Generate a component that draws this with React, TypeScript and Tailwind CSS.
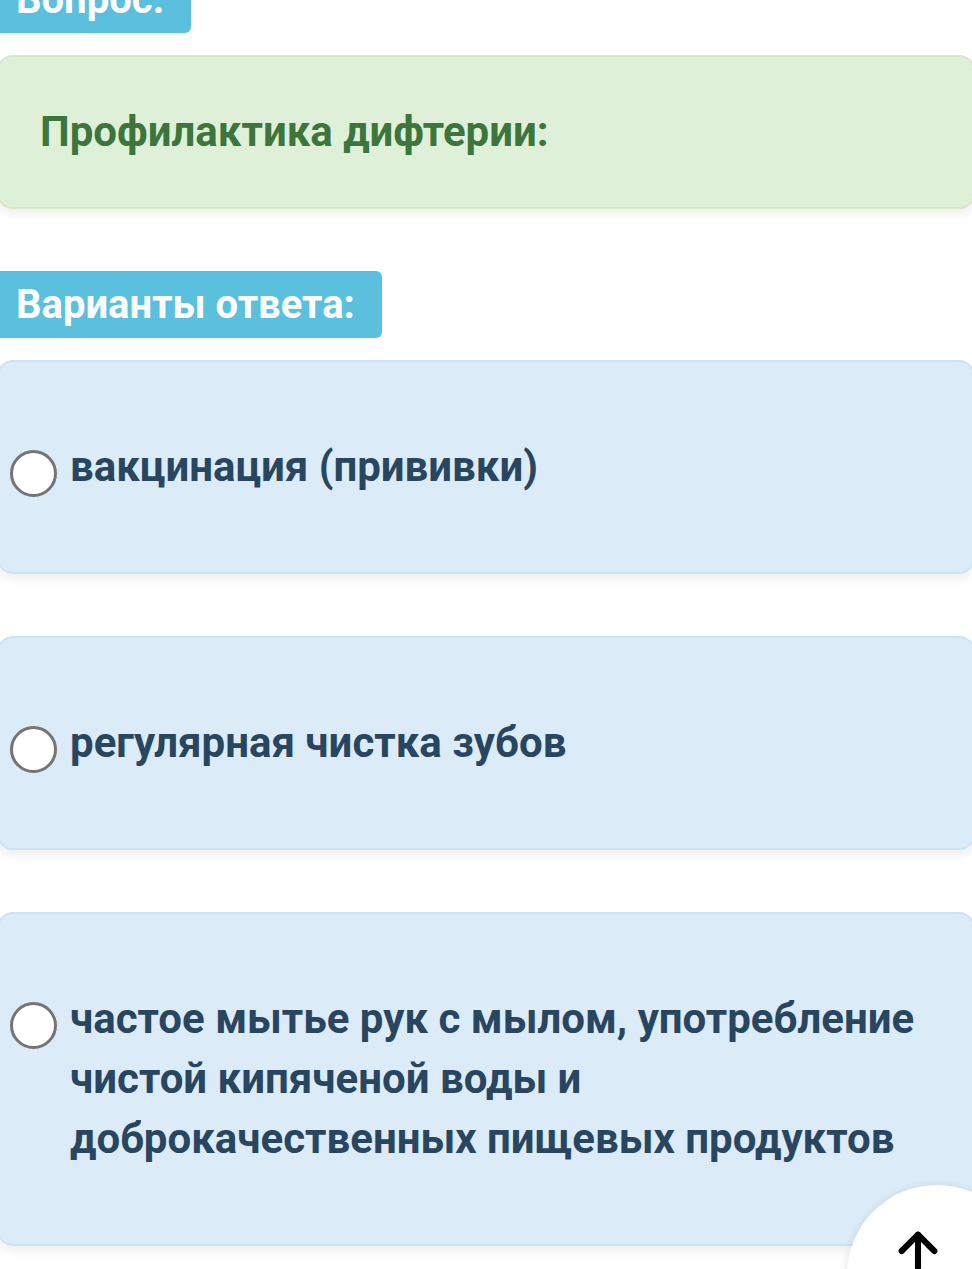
import { ArrowUp } from 'lucide-react';

const answers = [
  'вакцинация (прививки)',
  'регулярная чистка зубов',
  'частое мытье рук с мылом, употребление чистой кипяченой воды и доброкачественных пищевых продуктов',
];

function Label({ children }: { children: React.ReactNode }) {
  return (
    <div className="inline-block rounded-r-md bg-[#5bc0de] pl-[16px] pr-[27px] text-[40px] font-bold leading-[67px] text-white">
      {children}
    </div>
  );
}

export default function App() {
  return (
    <div className="relative h-[1269px] overflow-hidden bg-white font-['Roboto',sans-serif]">
      <div className="-mt-[34px] flex flex-col">
        <div>
          <Label>Вопрос:</Label>
        </div>

        <div className="mx-[-3px] mt-[22px] rounded-2xl border-2 border-[#d6e9c6] bg-[#dff0d8] px-[41px] py-[45px] shadow-[0_6px_8px_rgba(0,0,0,0.06)]">
          <p className="text-[42px] font-bold leading-[60px] text-[#3c763d]">Профилактика дифтерии:</p>
        </div>

        <div className="mt-[62px]">
          <Label>Варианты ответа:</Label>
        </div>

        <div className="mt-[22px] flex flex-col gap-[62px]">
          {answers.map((a) => (
            <div
              key={a}
              className="mx-[-3px] flex items-start gap-[13px] rounded-2xl border-2 border-[#cfe3f3] bg-[#dcebf8] py-[75px] pl-[11px] pr-10 shadow-[0_6px_8px_rgba(0,0,0,0.06)]"
            >
              <span className="mt-[13px] h-[47px] w-[47px] shrink-0 rounded-full border-[3px] border-[#757575] bg-white" />
              <span className="text-[42px] font-bold leading-[60px] text-[#294660]">{a}</span>
            </div>
          ))}
        </div>
      </div>

      <button className="absolute left-[847px] top-[1185px] flex h-[180px] w-[180px] justify-center rounded-full bg-white pt-[38px] pr-[38px] shadow-[0_2px_10px_rgba(0,0,0,0.12)]">
        <ArrowUp className="h-[56px] w-[56px] text-black" strokeWidth={2.6} />
      </button>
    </div>
  );
}
